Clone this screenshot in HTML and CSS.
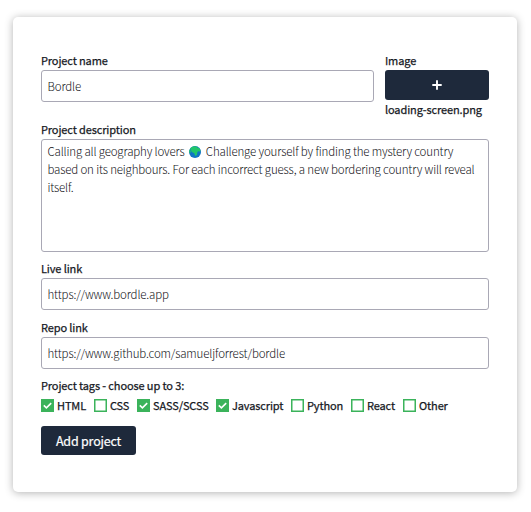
FILE: index.html
```html
<!DOCTYPE html>
<html lang="en">
<head>
<meta charset="utf-8">
<title>Add project</title>
<link rel="stylesheet" href="styles.css">
</head>
<body>
<form class="card">
  <div class="top-row">
    <div class="name-group">
      <div class="label">Project name</div>
      <div class="field">Bordle</div>
    </div>
    <div class="image-group">
      <div class="label">Image</div>
      <button type="button" class="upload" aria-label="Choose image"><svg width="10" height="10" viewBox="0 0 10 10"><path d="M5 .3v9.4M.3 5h9.4" stroke="#fff" stroke-width="1.9"/></svg></button>
      <div class="file-name">loading-screen.png</div>
    </div>
  </div>
  <div class="label">Project description</div>
  <div class="field description">
    <div class="line">Calling all geography lovers <svg class="globe" viewBox="0 0 12 12"><circle cx="6" cy="6" r="6" fill="#1175c4"/><path d="M1 2.8Q2.5.6 5 .2L8.7.7 8.2 2l2 .1 1.4 2.3-.9 1.3L9.5 5 8.2 6.4 8 9 6.2 10.1 5.2 7.2 2.8 6 2 4.4z" fill="#20c66b"/><path d="M.4 3.5 1.9 5 1.3 7 .2 6.7z" fill="#20c66b"/></svg> Challenge yourself by finding the mystery country</div>
    <div class="line">based on its neighbours. For each incorrect guess, a new bordering country will reveal</div>
    <div class="line">itself.</div>
  </div>
  <div class="label">Live link</div>
  <div class="field live">https://www.bordle.app</div>
  <div class="label">Repo link</div>
  <div class="field repo">https://www.github.com/samueljforrest/bordle</div>
  <div class="label tags-label">Project tags - choose up to 3:</div>
  <div class="tags">
    <div class="tag html"><svg class="box" viewBox="0 0 13 13"><path d="M0 0h13v13H0z" fill="#3bb35b"/><path d="m2.8 6.3 2.6 2.5 4.8-4.7" fill="none" stroke="#fff" stroke-width="1.6"/></svg><span>HTML</span></div>
    <div class="tag css"><svg class="box" viewBox="0 0 13 13"><path d="M.75.75h11.5v11.5H.75z" fill="#fff" stroke="#3bb35b" stroke-width="1.5"/></svg><span>CSS</span></div>
    <div class="tag sass"><svg class="box" viewBox="0 0 13 13"><path d="M0 0h13v13H0z" fill="#3bb35b"/><path d="m2.8 6.3 2.6 2.5 4.8-4.7" fill="none" stroke="#fff" stroke-width="1.6"/></svg><span>SASS/SCSS</span></div>
    <div class="tag js"><svg class="box" viewBox="0 0 13 13"><path d="M0 0h13v13H0z" fill="#3bb35b"/><path d="m2.8 6.3 2.6 2.5 4.8-4.7" fill="none" stroke="#fff" stroke-width="1.6"/></svg><span>Javascript</span></div>
    <div class="tag python"><svg class="box" viewBox="0 0 13 13"><path d="M.75.75h11.5v11.5H.75z" fill="#fff" stroke="#3bb35b" stroke-width="1.5"/></svg><span>Python</span></div>
    <div class="tag react"><svg class="box" viewBox="0 0 13 13"><path d="M.75.75h11.5v11.5H.75z" fill="#fff" stroke="#3bb35b" stroke-width="1.5"/></svg><span>React</span></div>
    <div class="tag other"><svg class="box" viewBox="0 0 13 13"><path d="M.75.75h11.5v11.5H.75z" fill="#fff" stroke="#3bb35b" stroke-width="1.5"/></svg><span>Other</span></div>
  </div>
  <button type="button" class="submit">Add project</button>
</form>
</body>
</html>
```
FILE: styles.css
```css
* { box-sizing: border-box; }

body {
  margin: 0;
  padding: 17px 14px 19px 13px;
  background: #fff;
  color: #15181e;
  font-family: "Noto Sans CJK SC", "Noto Sans", sans-serif;
  font-size: 11.5px;
}

.card {
  height: 475px;
  padding: 36px 28px;
  border-radius: 5px;
  background: #fff;
  box-shadow: 0 1px 8px rgba(0, 0, 0, .3);
}

.top-row {
  display: flex;
  gap: 11px;
  height: 69px;
}

.name-group { width: 333px; }
.image-group { width: 104px; }

.label,
.file-name,
.tag {
  font-size: 11px;
  font-weight: 400;
  letter-spacing: -.12px;
  -webkit-text-stroke: .25px currentColor;
  white-space: nowrap;
}

.label {
  height: 17px;
  line-height: 15px;
}

.field {
  height: 32px;
  padding: 0 5.5px;
  border: 1px solid #a9a8b5;
  border-radius: 3px;
  line-height: 30px;
  font-weight: 300;
  letter-spacing: -.16px;
  color: #101016;
  white-space: nowrap;
}

.upload,
.submit {
  display: flex;
  align-items: center;
  justify-content: center;
  padding: 0;
  border: 0;
  border-radius: 3px;
  background: #1e293b;
  color: #fff;
  font-family: inherit;
}

.upload { width: 104px; height: 30px; }

.file-name {
  height: 20px;
  line-height: 19px;
}

.description {
  height: 113px;
  margin-bottom: 9px;
  padding: 3px 5.5px;
}

.line { height: 18px; line-height: 17px; }

.globe {
  width: 12px;
  height: 12px;
  margin: 0 2px 0 2.5px;
  vertical-align: -2px;
}

.live { margin-bottom: 10px; line-height: 31px; }
.repo { margin-bottom: 9px; }
.tags-label { height: 16px; }

.tags {
  display: flex;
  height: 24px;
  padding-top: 5px;
}

.tag {
  display: flex;
  gap: 3px;
  height: 13px;
  line-height: 13px;
}

.html { width: 53px; }
.css { width: 43px; }
.sass { width: 79px; }
.js { width: 75px; }
.python { width: 60px; }
.react { width: 52px; }

.box { flex: none; width: 13px; height: 13px; }

.submit {
  width: 95px;
  height: 29px;
  padding-bottom: 1px;
  margin-top: 8px;
  font-size: 12.5px;
  font-weight: 400;
  letter-spacing: -.2px;
  -webkit-text-stroke: .2px currentColor;
}
```
